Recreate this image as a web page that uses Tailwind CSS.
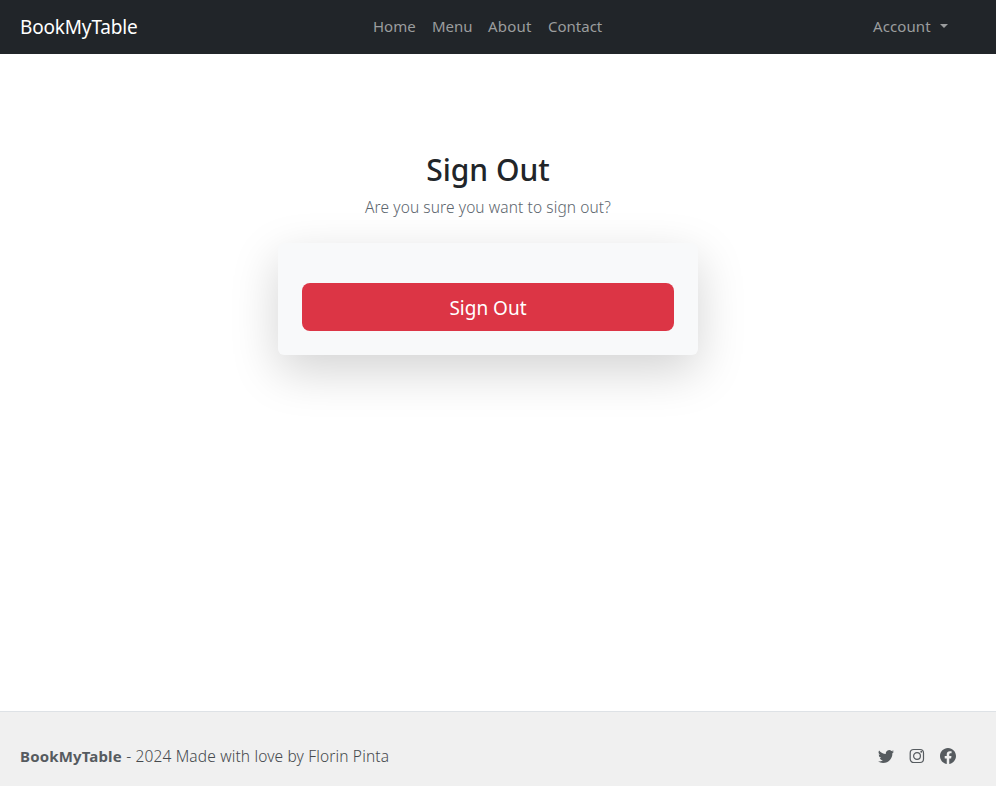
<!DOCTYPE html>
<html lang="en">
<head>
<meta charset="utf-8">
<title>BookMyTable</title>
<script src="https://cdn.jsdelivr.net/npm/@tailwindcss/browser@4"></script>
</head>
<body class="flex h-screen flex-col overflow-hidden bg-white font-['Noto_Sans','Open_Sans',sans-serif] text-[15px] leading-6 text-[#212529]">
<header class="flex h-[54px] shrink-0 items-center bg-[#212529] pr-12 pl-5 text-[#9b9d9e]">
  <a class="w-[353px] text-[19px] tracking-[-0.17px] text-white">BookMyTable</a>
  <nav class="flex pb-0.5 whitespace-nowrap">
    <a class="w-[59px]">Home</a><a class="w-[56px]">Menu</a><a class="w-[60px] tracking-[0.2px]">About</a><a>Contact</a>
  </nav>
  <a class="ml-auto flex w-[75px] items-center justify-between"><span class="pb-0.5 tracking-[0.1px]">Account</span><span class="mb-0.5 border-x-4 border-t-4 border-x-transparent border-t-[#9b9d9e]"></span></a>
</header>
<main class="flex grow flex-col items-center pr-5 pt-[97px]">
  <h1 class="text-[30px] font-medium leading-[38px]">Sign Out</h1>
  <p class="mt-1.5 text-[15.5px] font-light tracking-[0.1px] text-[#5c656d]">Are you sure you want to sign out?</p>
  <section class="mt-6 w-[420px] rounded-md bg-[#f8f9fa] px-6 pt-10 pb-6 shadow-[0_16px_48px_rgba(0,0,0,0.175)]">
    <button class="block h-12 w-full rounded-lg bg-[#dc3545] pt-0.5 text-[19px] text-white">Sign Out</button>
  </section>
</main>
<footer class="flex h-[75px] shrink-0 items-center border-t border-[#dee2e6] bg-[#f0f0f0] pt-3.5 pr-10 pl-5 text-[#565b5f]">
  <p class="flex whitespace-pre"><span class="w-[102px] font-bold tracking-[0.15px]">BookMyTable</span><span class="text-[15.5px] font-light tracking-[0.15px] text-[#45494d]"> - 2024 Made with love by Florin Pinta</span></p>
  <div class="ml-auto flex items-center gap-[15px]">
    <svg class="size-4" viewBox="0 0 16 16" fill="currentColor"><path d="M5.026 15c6.038 0 9.341-5.003 9.341-9.334q.002-.211-.006-.422A6.7 6.7 0 0 0 16 3.542a6.7 6.7 0 0 1-1.889.518 3.3 3.3 0 0 0 1.447-1.817 6.5 6.5 0 0 1-2.087.793A3.286 3.286 0 0 0 7.875 6.03a9.32 9.32 0 0 1-6.767-3.429 3.29 3.29 0 0 0 1.018 4.382A3.3 3.3 0 0 1 .64 6.575v.045a3.29 3.29 0 0 0 2.632 3.218 3.2 3.2 0 0 1-.865.115 3 3 0 0 1-.614-.057 3.28 3.28 0 0 0 3.067 2.277A6.6 6.6 0 0 1 .78 13.58a6 6 0 0 1-.78-.045A9.34 9.34 0 0 0 5.026 15"/></svg>
    <svg class="size-4" viewBox="0 0 16 16" fill="none" stroke="currentColor" stroke-width="1.2"><rect x="1.2" y="1.5" width="13.3" height="13" rx="3.5"/><circle cx="8" cy="8" r="3.4"/><circle cx="12.27" cy="3.73" r=".96" fill="currentColor" stroke="none"/></svg>
    <svg class="size-4" viewBox="0 0 16 16" fill="currentColor"><path d="M16 8.049c0-4.446-3.582-8.05-8-8.05C3.58 0-.002 3.603-.002 8.05c0 4.017 2.926 7.347 6.75 7.951v-5.625h-2.03V8.05H6.75V6.275c0-2.017 1.195-3.131 3.022-3.131.876 0 1.791.157 1.791.157v1.98h-1.009c-.993 0-1.303.621-1.303 1.258v1.51h2.218l-.354 2.326H9.25V16c3.824-.604 6.75-3.934 6.75-7.951"/></svg>
  </div>
</footer>
</body>
</html>
